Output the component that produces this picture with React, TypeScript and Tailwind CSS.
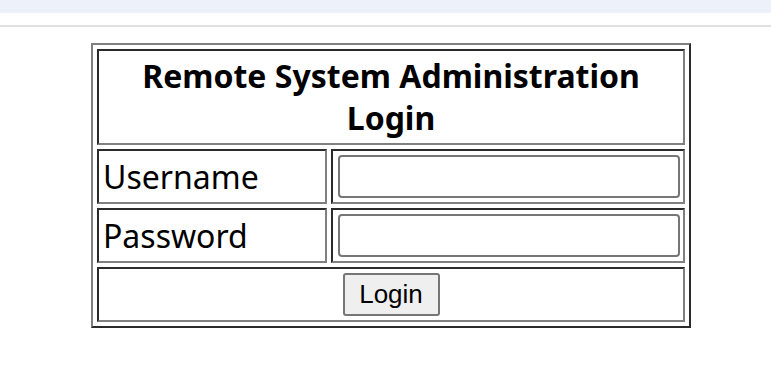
import React from 'react';

const outset = 'border-2 border-solid border-t-[#808080] border-l-[#808080] border-r-[#2b2b2b] border-b-[#2b2b2b]';
const inset = 'border-2 border-solid border-t-[#2b2b2b] border-l-[#2b2b2b] border-r-[#808080] border-b-[#808080]';

const App: React.FC = () => {
  return (
    <div className="w-[771px] h-[382px] bg-white overflow-hidden" style={{ fontFamily: '"Noto Sans", "Open Sans", sans-serif' }}>
      <div className="h-[13px] bg-[#edf1f9]" />
      <div className="h-[12px] bg-white" />
      <div className="h-[2px] bg-[#e0e0e0]" />

      <table className={`ml-[91px] mt-[16px] w-[600px] border-separate border-spacing-[4px] ${outset}`}>
        <tbody>
          <tr>
            <td colSpan={2} className={`h-[96px] text-center align-middle text-[32px] font-bold leading-[42px] text-black ${inset}`}>
              Remote System Administration
              <br />
              Login
            </td>
          </tr>
          {['Username', 'Password'].map((label) => (
            <tr key={label}>
              <td className={`w-[230px] h-[55px] pl-[4px] align-middle text-[32px] leading-[40px] text-black ${inset}`}>{label}</td>
              <td className={`h-[55px] pl-[5px] pr-[3px] align-middle ${inset}`}>
                <input
                  type={label === 'Password' ? 'password' : 'text'}
                  className="block w-full h-[43px] rounded-[4px] border-2 border-[#767676] bg-white outline-none"
                />
              </td>
            </tr>
          ))}
          <tr>
            <td colSpan={2} className={`h-[55px] text-center align-middle ${inset}`}>
              <button
                className="inline-flex items-center justify-center w-[97px] h-[43px] rounded-[3px] border-2 border-[#767676] bg-[#efefef] text-[26px] text-black align-middle"
                style={{ fontFamily: '"Liberation Sans", Arial, sans-serif' }}
              >
                Login
              </button>
            </td>
          </tr>
        </tbody>
      </table>
    </div>
  );
};

export default App;
